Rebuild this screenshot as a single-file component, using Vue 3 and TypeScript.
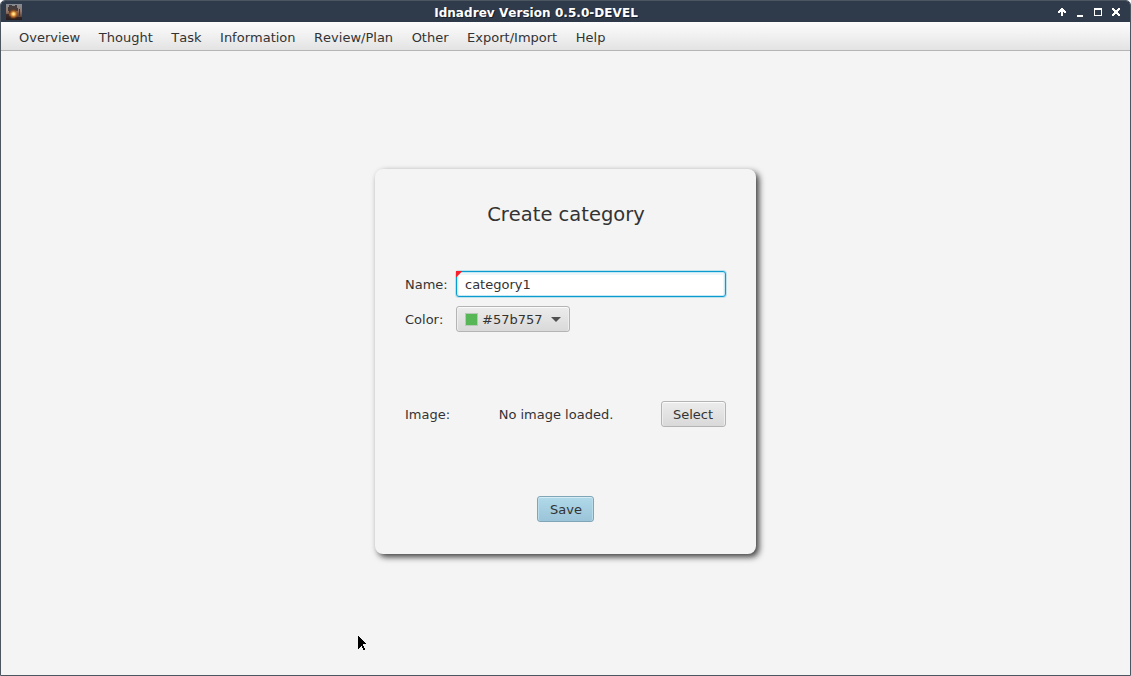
<script setup lang="ts">
import { ref } from 'vue'

const title = 'Idnadrev Version 0.5.0-DEVEL'
const menus: string[] = ['Overview', 'Thought', 'Task', 'Information', 'Review/Plan', 'Other', 'Export/Import', 'Help']
const name = ref('category1')
const color = ref('#57b757')
</script>

<template>
  <div class="window">
    <header class="titlebar">
      <svg class="app-icon" width="16" height="16" viewBox="0 0 16 16" shape-rendering="crispEdges">
        <defs>
          <linearGradient id="sky" x1="0" y1="0" x2="0" y2="1">
            <stop offset="0" stop-color="#858c95" />
            <stop offset=".45" stop-color="#94786a" />
            <stop offset="1" stop-color="#3a221c" />
          </linearGradient>
          <radialGradient id="sun">
            <stop offset="0" stop-color="#fffbe0" />
            <stop offset=".25" stop-color="#ffc45c" />
            <stop offset=".6" stop-color="#b5601f" stop-opacity=".75" />
            <stop offset="1" stop-color="#5a3018" stop-opacity="0" />
          </radialGradient>
        </defs>
        <rect width="16" height="16" fill="url(#sky)" />
        <path d="M3 1h3v1h3v-1h2v3h1v3h-2v1H8v4H6V9H3V7H2V3h1z" fill="#332a2b" opacity=".8" />
        <path d="M0 10h3v2h2v2h4v-1h7v3H0z" fill="#241b20" opacity=".7" />
        <path d="M13 5h1v7h-1z" fill="#42363a" />
        <circle cx="7.5" cy="10" r="5.5" fill="url(#sun)" />
      </svg>
      <span class="title">{{ title }}</span>
      <svg class="controls" width="64" height="12" viewBox="0 0 64 12" shape-rendering="crispEdges">
        <path d="M4 1h2v1h1v1h1v1h1v2H7V5H6v4H4V5H3v1H1V4h1V3h1V2h1z" fill="#fff" />
        <path d="M20 8h6v2h-6z" fill="#fff" />
        <path d="M37 1h8v8h-8zM38 3v5h6V3z" fill="#fff" fill-rule="evenodd" />
        <path d="M55 1h2v1h1v1h2V2h1V1h2v2h-1v1h-1v2h1v1h1v2h-2V8h-1V7h-2v1h-1v1h-2V7h1V6h1V4h-1V3h-1z" fill="#fff" />
      </svg>
    </header>
    <nav class="menubar">
      <span v-for="menu in menus" :key="menu" class="menu">{{ menu }}</span>
    </nav>
    <main class="content">
      <form class="card" @submit.prevent>
        <h1>Create category</h1>
        <div class="row name-row">
          <label class="label" for="category-name">Name:</label>
          <div class="field">
            <input id="category-name" v-model="name" type="text" spellcheck="false" />
            <svg class="required" width="6" height="6" viewBox="0 0 6 6"><path d="M0 0h6v.6L.6 6H0z" fill="#f8202c" /></svg>
          </div>
        </div>
        <div class="row color-row">
          <span class="label">Color:</span>
          <button type="button" class="button picker">
            <span class="swatch" :style="{ backgroundColor: color }"></span>
            <span class="hex">{{ color }}</span>
            <svg width="10" height="5" viewBox="0 0 10 5"><path d="M0 0h10L5 5z" fill="#505050" /></svg>
          </button>
        </div>
        <div class="row image-row">
          <span class="label">Image:</span>
          <span class="status">No image loaded.</span>
          <button type="button" class="button select">Select</button>
        </div>
        <button type="submit" class="button save">Save</button>
      </form>
      <svg class="pointer" width="10" height="17" viewBox="0 0 10 17" shape-rendering="crispEdges">
        <path d="M0 0h1v1h1v1h1v1h1v1h1v1h1v1h1v1h1v1H5v2h1v2h1v2H5v-2H4v-2H3v1H2v1H1v1H0z" fill="#000" />
      </svg>
    </main>
  </div>
</template>

<style>
html,
body {
  margin: 0;
  overflow: hidden;
  background: #fff;
}
</style>

<style scoped>
.window {
  box-sizing: border-box;
  width: 1131px;
  height: 676px;
  display: flex;
  flex-direction: column;
  border: 1px solid #4b5660;
  border-radius: 5px 5px 0 0;
  overflow: hidden;
  background: #f4f4f4;
  color: #333;
  font: 13px/16px "DejaVu Sans", sans-serif;
  font-kerning: none;
}
.titlebar {
  height: 21px;
  flex: none;
  display: grid;
  grid-template-columns: 64px 1fr 64px;
  align-items: center;
  padding: 0 9px 0 5px;
  background: #2f3b4b;
}
.app-icon {
  margin-top: 1px;
}
.title {
  padding: 2px 55px 0 0;
  text-align: center;
  font-size: 12px;
  font-weight: bold;
  letter-spacing: 0.05px;
  color: #fff;
  text-shadow: 1px 1px 0 #18202a;
}
.controls {
  margin-top: 2px;
}
.menubar {
  height: 28px;
  box-sizing: content-box;
  flex: none;
  display: flex;
  align-items: center;
  gap: 18.55px;
  padding-left: 18px;
  background: linear-gradient(#fdfdfd, #e3e3e3);
  border-bottom: 1px solid #b5b5b5;
}
.menu {
  padding-top: 3px;
}
.content {
  position: relative;
  flex: 1;
  display: flex;
  justify-content: center;
  align-items: flex-start;
  padding-top: 118px;
}
.card {
  box-sizing: border-box;
  width: 381px;
  height: 385px;
  padding: 34px 30px 0;
  border-radius: 8px;
  background: #f4f4f4;
  box-shadow: 3px 3px 6px rgba(0, 0, 0, 0.75);
  display: flex;
  flex-direction: column;
  align-items: center;
}
h1 {
  margin: 0;
  padding-left: 1px;
  font-size: 19.5px;
  font-weight: normal;
  line-height: 24px;
}
.row {
  width: 100%;
  height: 26px;
  display: grid;
  grid-template-columns: 51px 1fr;
  align-items: center;
}
.label {
  padding-top: 2px;
}
.name-row {
  margin-top: 44px;
}
.color-row {
  margin-top: 9px;
}
.image-row {
  margin-top: 69px;
  grid-template-columns: 51px 1fr 65px;
}
.field {
  position: relative;
  height: 26px;
}
input {
  box-sizing: border-box;
  display: block;
  width: 100%;
  height: 26px;
  padding: 0 8px;
  border: 1px solid #0a9bcf;
  border-radius: 3px;
  outline: none;
  background: #fff;
  color: #333;
  font: inherit;
  box-shadow: 0 0 0 1px rgba(3, 158, 211, 0.22), inset 0 0 0 1px #c4e8f4, inset 0 1px 0 2px #edf6f9;
}
.required {
  position: absolute;
  top: 0;
  left: 0;
}
.button {
  box-sizing: border-box;
  height: 26px;
  padding: 2px 0 0;
  border: 1px solid #b4b4b4;
  border-radius: 3px;
  background: linear-gradient(#ececec, #d9d9d9);
  box-shadow: inset 0 1px 0 #fbfbfb, inset 1px 0 0 #eee, inset -1px 0 0 #eee;
  color: #333;
  font: inherit;
  font-kerning: none;
}
.picker {
  width: 114px;
  display: flex;
  align-items: center;
  padding: 0 8px;
}
.swatch {
  box-sizing: border-box;
  width: 13px;
  height: 13px;
  margin-right: 4px;
  border: 1px solid #b9c9b9;
}
.hex {
  margin-right: auto;
  padding-top: 2px;
}
.status {
  text-align: center;
  padding: 2px 5px 0 0;
}
.select {
  width: 65px;
  padding-right: 1px;
}
.save {
  width: 57px;
  margin-top: 69px;
  padding-left: 1px;
  border-color: #7fa5b7;
  background: linear-gradient(#b0d9e9, #9bc4d9);
  box-shadow: inset 0 1px 0 #d5ecf5, inset 1px 0 0 #b9dcea, inset -1px 0 0 #b9dcea;
}
.pointer {
  position: absolute;
  left: 357px;
  top: 585px;
}
</style>
